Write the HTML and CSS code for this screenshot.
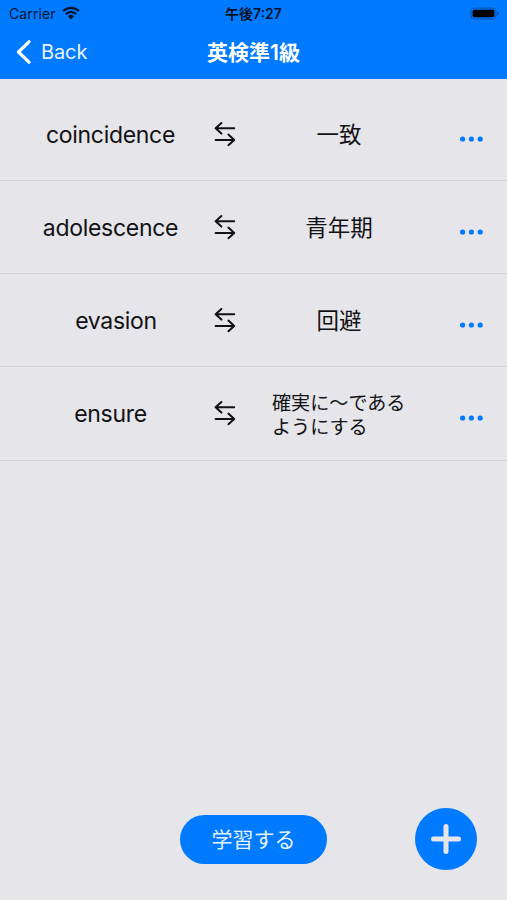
FILE: index.html
```
<!DOCTYPE html>
<html lang="ja">
<head>
    <meta charset="UTF-8">
    <meta name="viewport" content="width=device-width, initial-scale=1.0">
    <title>英検準1級</title>
    <link rel="stylesheet" href="styles.css">
</head>
<body>
    <svg width="0" height="0" class="symbols">
        <symbol id="swap" viewBox="0 0 24 28">
            <path d="M21.2 8.2H2.6M8.4 3L2.6 8.2L8.4 13.6M2.6 20H21.2M15.4 14.6L21.2 20L15.4 25.2"/>
        </symbol>
        <symbol id="dots" viewBox="0 0 26 6">
            <circle cx="3.6" cy="3" r="2.6"/>
            <circle cx="12.4" cy="3" r="2.6"/>
            <circle cx="21.2" cy="3" r="2.6"/>
        </symbol>
    </svg>

    <header class="header">
        <div class="status">
            <div class="carrier">
                <span>Carrier</span>
                <svg class="wifi" width="18" height="14" viewBox="0 0 18 14">
                    <path d="M1.1 5C5.6.7 12.4.7 16.9 5M3.9 8.1C6.8 5.2 11.2 5.2 14.1 8.1"/>
                    <path class="wifi-dot" d="M5.9 10.2Q9 7.4 12.1 10.2L9 13.4Z"/>
                </svg>
            </div>
            <div class="clock">午後7:27</div>
            <svg class="battery" width="30" height="14" viewBox="0 0 30 14">
                <rect class="battery-case" x="1" y="1.1" width="25" height="10.8" rx="3.2"/>
                <rect x="2.6" y="2.7" width="21.8" height="7.6" rx="1.8"/>
                <path d="M27.4 4.7Q29 5.3 29 6.5T27.4 8.3Z" opacity=".4"/>
            </svg>
        </div>
        <nav class="navbar">
            <a class="back" href="#">
                <svg width="16" height="26" viewBox="0 0 16 26">
                    <path d="M14 2.8L3.5 13L14 23.2"/>
                </svg>
                <span>Back</span>
            </a>
            <h1 class="title">英検準1級</h1>
        </nav>
    </header>

    <main class="list">
        <div class="row">
            <div class="word">coincidence</div>
            <svg class="swap"><use href="#swap"/></svg>
            <div class="meaning">一致</div>
            <svg class="dots"><use href="#dots"/></svg>
        </div>
        <div class="row">
            <div class="word">adolescence</div>
            <svg class="swap"><use href="#swap"/></svg>
            <div class="meaning">青年期</div>
            <svg class="dots"><use href="#dots"/></svg>
        </div>
        <div class="row">
            <div class="word word-indent">evasion</div>
            <svg class="swap"><use href="#swap"/></svg>
            <div class="meaning">回避</div>
            <svg class="dots"><use href="#dots"/></svg>
        </div>
        <div class="row">
            <div class="word">ensure</div>
            <svg class="swap"><use href="#swap"/></svg>
            <div class="meaning meaning-long">確実に〜である<br>ようにする</div>
            <svg class="dots"><use href="#dots"/></svg>
        </div>
    </main>

    <footer class="footer">
        <button class="study">学習する</button>
        <button class="add">
            <svg width="32" height="32" viewBox="0 0 32 32">
                <path d="M16 3.5V28.5M3.5 16H28.5"/>
            </svg>
        </button>
    </footer>
</body>
</html>
```
FILE: styles.css
```
* {
    box-sizing: border-box;
}

body {
    margin: 0;
    height: 900px;
    display: flex;
    flex-direction: column;
    background-color: #e5e5ea;
    color: #121214;
    font-family: "Inter", "Noto Sans CJK JP", sans-serif;
    overflow: hidden;
}

.symbols {
    position: absolute;
}

/* Header */
.header {
    height: 79px;
    background-color: #007aff;
}

.status {
    height: 27px;
    display: grid;
    grid-template-columns: 1fr auto 1fr;
    align-items: center;
    padding: 0 7px 0 9px;
    font-size: 14px;
    line-height: 27px;
    color: #03142b;
}

.carrier {
    display: flex;
    align-items: center;
    gap: 6px;
    letter-spacing: 0.1px;
}

.wifi {
    margin-top: -2px;
    fill: none;
    stroke: #03142b;
    stroke-width: 2.3;
}

.wifi-dot {
    fill: #03142b;
    stroke: none;
}

.clock {
    padding: 1px 2px 0 0;
    font-size: 14px;
    font-weight: 600;
    line-height: 26px;
}

.battery {
    justify-self: end;
}

.battery-case {
    fill: none;
    stroke: #03142b;
    stroke-opacity: 0.4;
}

.navbar {
    height: 50px;
    display: grid;
    grid-template-columns: 1fr auto 1fr;
    align-items: center;
    padding: 0 15px;
    color: #fff;
}

.back {
    display: flex;
    align-items: center;
    gap: 10px;
    color: #e8f3ff;
    font-size: 20px;
    letter-spacing: -0.1px;
    text-decoration: none;
}

.back path {
    fill: none;
    stroke: #fff;
    stroke-width: 3.2;
    stroke-linecap: round;
    stroke-linejoin: round;
}

.title {
    margin: -2px 0 0;
    font-size: 21px;
    font-weight: 600;
}

/* Word list */
.list {
    flex: 1;
    padding-top: 8.8px;
}

.row {
    height: 93.2px;
    display: grid;
    grid-template-columns: 205px 24px 204px 1fr;
    align-items: center;
    padding-left: 8px;
    border-bottom: 1px solid #d3d3d8;
}

.word {
    padding-top: 2px;
    text-align: center;
    font-size: 23px;
    letter-spacing: -0.3px;
}

.word-indent {
    padding-left: 11px;
}

.swap {
    width: 24px;
    height: 28px;
    fill: none;
    stroke: #121214;
    stroke-width: 2;
    stroke-linecap: round;
    stroke-linejoin: round;
}

.meaning {
    padding-bottom: 2px;
    text-align: center;
    font-size: 22.5px;
}

.meaning-long {
    padding: 4px 0 0 35px;
    text-align: left;
    font-size: 19.1px;
    line-height: 24px;
}

.dots {
    width: 26px;
    height: 6px;
    margin: 10px 0 0 18px;
    fill: #007aff;
}

/* Bottom buttons */
.footer {
    display: grid;
    grid-template-columns: 1fr auto 1fr;
    align-items: center;
    padding: 0 30px 30px;
}

button {
    border: none;
    padding: 0;
    background-color: #007aff;
    font-family: inherit;
}

.study {
    grid-column: 2;
    width: 147px;
    height: 49px;
    padding-bottom: 2px;
    border-radius: 25px;
    color: #e5f2ff;
    font-size: 21px;
}

.add {
    justify-self: end;
    width: 62px;
    height: 62px;
    display: flex;
    align-items: center;
    justify-content: center;
    border-radius: 50%;
}

.add path {
    stroke: #e5e5ea;
    stroke-width: 5;
    stroke-linecap: round;
}
```
